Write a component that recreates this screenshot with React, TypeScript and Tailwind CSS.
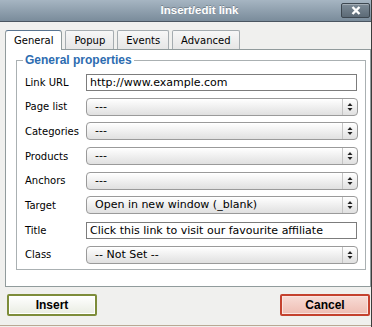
import React from "react";

const font = { fontFamily: '"DejaVu Sans", Verdana, sans-serif' };
const arial = { fontFamily: '"Liberation Sans", Arial, sans-serif' };

function Select({ value }: { value: string }) {
  return (
    <div className="flex h-[18px] w-[272px] items-stretch rounded-[4px] border border-[#9a9a9a] bg-gradient-to-b from-white to-[#e0e0e0] shadow-[inset_0_1px_0_#fff]">
      <span className="flex-1 pl-[8px] text-[11px] leading-[16px] text-black">{value}</span>
      <span className="flex w-[15px] items-center justify-center border-l border-[#c4c4c4]">
        <svg width="6" height="10" viewBox="0 0 6 10">
          <path d="M3 1 L5.5 4 L0.5 4 Z" fill="#222" />
          <path d="M3 9 L5.5 6 L0.5 6 Z" fill="#222" />
        </svg>
      </span>
    </div>
  );
}

function TextInput({ value }: { value: string }) {
  return (
    <div className="h-[17px] w-[271px] border border-[#7c7c7c] bg-white pl-[3px] text-[11px] leading-[15px] text-black">
      {value}
    </div>
  );
}

const rows: { label: string; kind: "input" | "select"; value: string }[] = [
  { label: "Link URL", kind: "input", value: "http://www.example.com" },
  { label: "Page list", kind: "select", value: "---" },
  { label: "Categories", kind: "select", value: "---" },
  { label: "Products", kind: "select", value: "---" },
  { label: "Anchors", kind: "select", value: "---" },
  { label: "Target", kind: "select", value: "Open in new window (_blank)" },
  { label: "Title", kind: "input", value: "Click this link to visit our favourite affiliate" },
  { label: "Class", kind: "select", value: "-- Not Set --" },
];

const tabs = ["General", "Popup", "Events", "Advanced"];

export default function App() {
  return (
    <div className="relative flex h-[327px] w-[372px] flex-col overflow-hidden border-r border-[#3c3c3c] bg-[#f0f0ee]" style={font}>
      {/* title bar */}
      <div className="relative flex h-[22px] items-center justify-center border-b border-[#4a5560] bg-gradient-to-b from-[#a6b5c2] to-[#7a8c9b]">
        <span className="pl-[28px] text-[11.5px] font-bold text-white [text-shadow:0_-1px_0_rgba(0,0,0,0.25)]" style={arial}>
          Insert/edit link
        </span>
        <div className="absolute right-[1px] top-[3px] flex h-[15px] w-[29px] items-center justify-center rounded-[2px] border border-[#3d4750] bg-gradient-to-b from-[#7d8b97] to-[#5c6a76] shadow-[inset_0_1px_0_rgba(255,255,255,0.3)]">
          <svg width="10" height="9" viewBox="0 0 10 9">
            <path d="M1.5 1 L8.5 8 M8.5 1 L1.5 8" stroke="#fff" strokeWidth="2.4" />
          </svg>
        </div>
      </div>

      {/* tabs */}
      <div className="mt-[8px] flex gap-[3px] pl-[5px]">
        {tabs.map((t, i) => (
          <div
            key={t}
            className={
              i === 0
                ? "relative z-10 -mb-px flex h-[20px] items-center rounded-t-[3px] border border-b-0 border-[#919b9c] border-t-[#5a7590] bg-white px-[8px] text-[10px] text-black"
                : "flex h-[19px] items-center rounded-t-[2px] border border-b-0 border-[#a5acb0] bg-gradient-to-b from-[#f7f7f7] to-[#e6e6e6] px-[8px] text-[10px] text-black"
            }
          >
            {t}
          </div>
        ))}
      </div>

      {/* panel */}
      <div className="ml-[5px] h-[238px] border border-[#919b9c] bg-white pl-[10px] pr-[4px] pt-[1px]">
        <fieldset className="h-[219px] border border-[#aab0b2] pl-[8px]">
          <legend className="-ml-[2px] px-[2px] text-[12px] font-bold text-[#2d6cb0]" style={arial}>
            General properties
          </legend>
          <div className="mt-[4px] flex flex-col gap-[6.7px]">
            {rows.map((r) => (
              <div key={r.label} className="flex h-[18px] items-center">
                <span className="w-[61px] text-[10px] text-black">{r.label}</span>
                {r.kind === "input" ? <TextInput value={r.value} /> : <Select value={r.value} />}
              </div>
            ))}
          </div>
        </fieldset>
      </div>

      {/* buttons */}
      <div className="flex justify-between pl-[7px] pr-[1px] pt-[7px]" style={arial}>
        <button className="h-[22px] w-[90px] rounded-[2px] border-2 border-[#7d8c3a] bg-gradient-to-b from-white to-[#e9ece2] text-[12px] font-bold text-black shadow-[inset_0_0_0_1px_#fff]">
          Insert
        </button>
        <button className="h-[22px] w-[90px] rounded-[2px] border-2 border-[#c4412e] bg-gradient-to-b from-[#f8dcd6] to-[#eebdb3] text-[12px] font-bold text-black shadow-[inset_0_0_0_1px_#f9e4e0]">
          Cancel
        </button>
      </div>
      <div className="absolute bottom-[1px] left-0 right-0 h-px bg-[#b9a894]" />
    </div>
  );
}
